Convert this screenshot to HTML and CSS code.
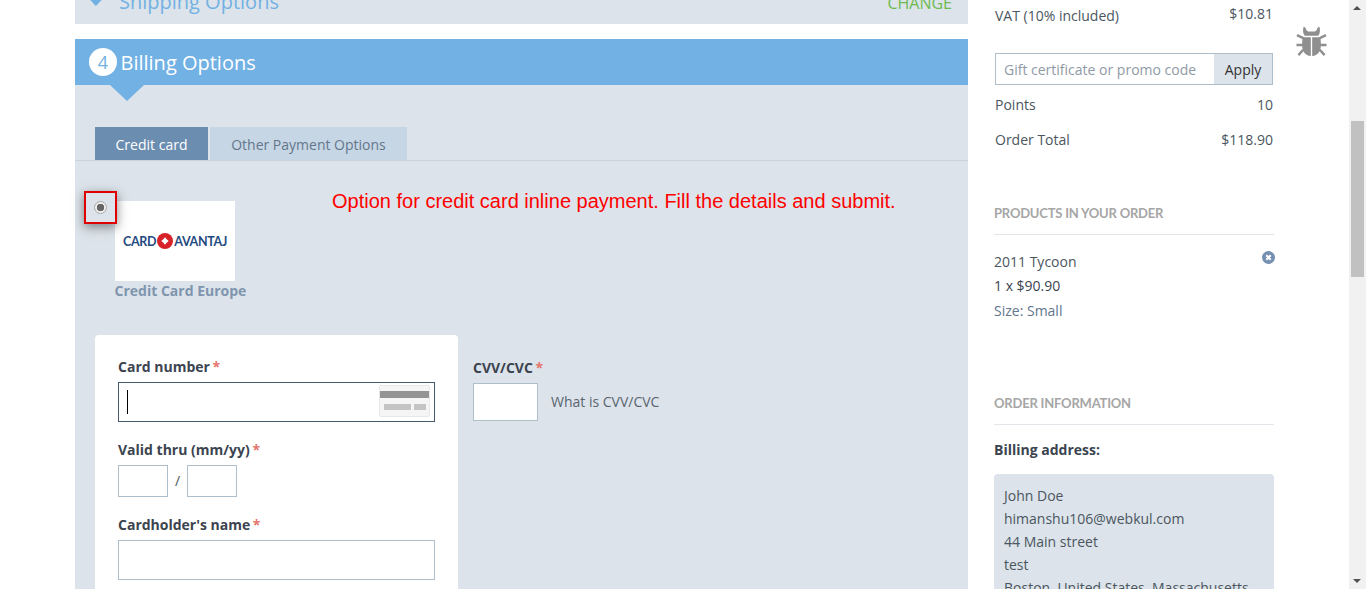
FILE: index.html
```html
<!DOCTYPE html>
<html lang="en">
  <head>
    <meta charset="UTF-8" />
    <title>Checkout - Billing Options</title>
    <link rel="stylesheet" href="styles.css">
  </head>
  <body>
    <div class="page">
      <main class="steps">
        <!-- Previous step, scrolled mostly out of view -->
        <section class="step-done">
          <span class="done-title"><span class="check"></span>Shipping Options</span>
          <a class="change" href="#">CHANGE</a>
        </section>

        <section class="step-billing">
          <header class="step-head">
            <span class="step-num">4</span>
            <h2>Billing Options</h2>
          </header>

          <div class="tabs">
            <a class="tab tab-active" href="#">Credit card</a>
            <a class="tab" href="#">Other Payment Options</a>
          </div>

          <div class="method">
            <span class="mark-box"><span class="radio"></span></span>
            <p class="note">Option for credit card inline payment. Fill the details and submit.</p>
            <div class="logo">
              <span>CARD</span>
              <svg width="16" height="16" viewBox="0 0 17 17">
                <circle cx="8.5" cy="8.5" r="8.5" fill="#d8222a" />
                <path d="M8.5 4.5c1 1.600 2.400 3 4 4-1.600 1-3 2.400-4 4-1-1.600-2.400-3-4-4 1.600-1 3-2.400 4-4z" fill="#fff" />
              </svg>
              <span>AVANTAJ</span>
            </div>
            <p class="method-name">Credit Card Europe</p>
          </div>

          <div class="card-row">
            <form class="card-form">
              <label>Card number <em>*</em></label>
              <div class="field field-focus">
                <span class="caret"></span>
                <span class="card-pic"><i class="strip"></i><i class="num"></i><i class="cvv"></i></span>
              </div>
              <label>Valid thru (mm/yy) <em>*</em></label>
              <div class="expiry">
                <span class="field field-small"></span>
                <span class="slash">/</span>
                <span class="field field-small"></span>
              </div>
              <label>Cardholder's name <em>*</em></label>
              <div class="field"></div>
            </form>
            <div class="cvv-col">
              <label>CVV/CVC <em>*</em></label>
              <div class="cvv-row">
                <span class="field field-cvv"></span>
                <span class="cvv-help">What is CVV/CVC</span>
              </div>
            </div>
          </div>
        </section>
      </main>

      <aside class="summary">
        <div class="row row-vat"><span>VAT (10% included)</span><span class="vat-val">$10.81</span></div>
        <div class="promo">
          <span class="promo-input">Gift certificate or promo code</span>
          <span class="promo-btn">Apply</span>
        </div>
        <div class="row row-points"><span>Points</span><span>10</span></div>
        <div class="row row-total"><span>Order Total</span><span>$118.90</span></div>

        <h3 class="side-title side-products">PRODUCTS IN YOUR ORDER</h3>
        <div class="product">
          <p>2011 Tycoon</p>
          <p class="qty">1 x $90.90</p>
          <p class="size">Size: Small</p>
          <svg class="remove" width="13" height="13" viewBox="0 0 13 13">
            <circle cx="6.5" cy="6.5" r="6.5" fill="#7590b0" />
            <path d="M4.3 4.3l4.4 4.4M8.7 4.3l-4.4 4.4" stroke="#fff" stroke-width="2" />
          </svg>
        </div>

        <h3 class="side-title side-info">ORDER INFORMATION</h3>
        <p class="addr-title">Billing address:</p>
        <div class="addr">
          <p>John Doe</p>
          <p>himanshu106@webkul.com</p>
          <p>44 Main street</p>
          <p>test</p>
          <p>Boston, United States, Massachusetts</p>
        </div>
      </aside>

      <svg class="bug" width="31" height="33" viewBox="0 0 32 34">
        <path d="M8 1.500l2 1.500c.2 2 1.200 3.200 2.600 3.600h6.800C20.800 6.200 21.800 5 22 3l2-1.500c1.200 3 1 7-1 9.500H9C7 8.500 6.800 4.500 8 1.500z" fill="#8f8f8f" />
        <path d="M7 12.500h8.300V32C9.500 31.500 6.300 27 6.300 20.500c0-3 .2-6 .7-8zM16.700 12.500H25c.5 2 .7 5 .7 8 0 6.500-3.200 11-9 11.500z" fill="#8f8f8f" />
        <path d="M1 10.500l6.500 3M31 10.500l-6.500 3M.5 20.500h6.500M31.500 20.500H25M2.500 31l5-5.500M29.500 31l-5-5.500" stroke="#8f8f8f" stroke-width="2.600" fill="none" />
      </svg>

      <div class="scrollbar">
        <span class="arrow arrow-up"></span>
        <div class="track"><div class="thumb"></div></div>
        <span class="arrow arrow-down"></span>
      </div>
    </div>
  </body>
</html>
```

FILE: styles.css
```css
/* Reset */
* {
  margin: 0;
  padding: 0;
  box-sizing: border-box;
}

html,
body {
  height: 589px;
  overflow: hidden;
}

body {
  background-color: #fff;
  color: #4b5660;
  font-family: "Open Sans", "Noto Sans", sans-serif;
  font-size: 14px;
}

a {
  text-decoration: none;
}

.page {
  position: relative;
  display: flex;
  height: 589px;
  padding-left: 75px;
  overflow: hidden;
}

/* Left column */
.steps {
  flex: 0 0 893px;
}

.step-done {
  display: flex;
  justify-content: space-between;
  height: 35px;
  margin-top: -11px;
  padding: 0 16px 0 15px;
  background-color: #dce3ea;
  line-height: 26px;
}

.done-title {
  display: flex;
  align-items: center;
  height: 26px;
  color: #72b1e3;
  font-size: 20px;
}

.check {
  width: 14px;
  height: 8px;
  margin: 0 14px 8px 1px;
  border-left: 4px solid #72b1e3;
  border-bottom: 4px solid #72b1e3;
  transform: rotate(-45deg);
}

.change {
  margin-top: 1px;
  color: #6dbb4f;
  font-size: 16px;
}

.step-billing {
  height: 560px;
  margin-top: 15px;
  background-color: #dce3ea;
}

.step-head {
  position: relative;
  display: flex;
  align-items: center;
  height: 46px;
  padding-left: 14px;
  background-color: #72b1e3;
  color: #fff;
}

/* Little arrow under the header */
.step-head::after {
  content: "";
  position: absolute;
  top: 46px;
  left: 35px;
  border-left: 17px solid transparent;
  border-right: 17px solid transparent;
  border-top: 16px solid #72b1e3;
}

.step-num {
  width: 28px;
  height: 28px;
  margin-right: 4px;
  border-radius: 50%;
  background-color: #fff;
  color: #72b1e3;
  font-size: 18px;
  line-height: 28px;
  text-align: center;
}

.step-head h2 {
  margin-left: -0.5px;
  font-size: 20px;
  font-weight: 400;
}

.tabs {
  display: flex;
  height: 34px;
  margin-top: 42px;
  padding-left: 20px;
  border-bottom: 1px solid #c8d3de;
}

.tab {
  width: 197px;
  height: 33px;
  background-color: #c7d6e5;
  color: #62768c;
  line-height: 35px;
  text-align: center;
}

.tab-active {
  width: 113px;
  margin-right: 2px;
  background-color: #6b8db0;
  color: #fff;
}

/* Payment method */
.method {
  position: relative;
  height: 174px;
  padding: 40px 0 0 40px;
}

.mark-box {
  position: absolute;
  top: 30px;
  left: 9px;
  display: flex;
  align-items: center;
  justify-content: center;
  width: 33px;
  height: 33px;
  border: 2px solid #e00000;
  box-shadow: 0 3px 10px rgba(60, 60, 60, 0.6);
  background-color: #dce3ea;
}

.radio {
  width: 13px;
  height: 13px;
  border: 1px solid #aaa;
  border-radius: 50%;
  background: radial-gradient(circle, #666 0 3.5px, #eee 4px);
}

.note {
  position: absolute;
  top: 29px;
  left: 257px;
  color: #f00;
  font-family: "Liberation Sans", sans-serif;
  font-size: 20px;
  white-space: nowrap;
}

.logo {
  display: flex;
  align-items: center;
  justify-content: center;
  gap: 1px;
  width: 120px;
  height: 80px;
  background-color: #fff;
  color: #1f4a80;
  font-family: "Lato", sans-serif;
  font-size: 12.5px;
  font-weight: 700;
  letter-spacing: -0.3px;
}

.method-name {
  margin-left: -0.5px;
  color: #7f95ae;
  font-weight: 700;
  line-height: 20px;
}

/* Card form */
.card-row {
  display: flex;
  padding-left: 20px;
}

.card-form {
  flex: 0 0 363px;
  height: 300px;
  padding: 22px 23px;
  border-radius: 4px;
  background-color: #fff;
}

label {
  display: block;
  color: #3b444f;
  font-weight: 700;
  line-height: 20px;
}

label em {
  margin-left: -1px;
  color: #e4746c;
  font-style: normal;
}

.field {
  display: block;
  height: 40px;
  border: 1px solid #aebfcb;
  background-color: #fff;
}

.card-form .field + label {
  margin-top: 18px;
}

.card-form label {
  margin-bottom: 5px;
}

.expiry + label {
  margin-top: 18px;
}

.field-focus {
  position: relative;
  display: flex;
  justify-content: space-between;
  padding: 7px 4px 0 8px;
  border-color: #46596b;
}

.caret {
  width: 1px;
  height: 24px;
  background-color: #000;
}

.card-pic {
  position: relative;
  display: block;
  width: 51px;
  height: 32px;
  margin-top: -5px;
  border: 1px solid #e8e8e8;
  border-radius: 2px;
  background-color: #f5f5f5;
}

.card-pic i {
  position: absolute;
  background-color: #c4c4c4;
}

.card-pic .strip {
  top: 5px;
  left: 0;
  right: 0;
  height: 7px;
  background-color: #949494;
}

.card-pic .num {
  top: 18px;
  left: 4px;
  width: 27px;
  height: 6px;
}

.card-pic .cvv {
  top: 18px;
  left: 34px;
  width: 12px;
  height: 6px;
}

.expiry {
  display: flex;
  align-items: center;
}

.field-small {
  width: 50px;
  height: 32px;
}

.slash {
  width: 19px;
  margin-top: -1px;
  text-align: center;
}

.cvv-col {
  padding: 23px 0 0 15px;
}

.cvv-col label {
  margin-bottom: 5px;
}

.cvv-row {
  display: flex;
  align-items: center;
}

.field-cvv {
  width: 65px;
  height: 38px;
  margin-right: 13px;
}

.cvv-help {
  margin-top: -2px;
  color: #5a6570;
}

/* Right column */
.summary {
  flex: 0 0 280px;
  margin-left: 26px;
}

.row {
  display: flex;
  justify-content: space-between;
  padding: 0 1px;
  line-height: 20px;
}

.row-vat {
  height: 20px;
  margin-top: 6px;
}

.vat-val {
  margin-top: -2px;
}

.promo {
  display: flex;
  height: 32px;
  margin: 27px 1px 0;
  border: 1px solid #aebfcb;
}

.promo-input {
  flex: 1;
  padding-left: 8px;
  color: #8f9aa6;
  line-height: 32px;
}

.promo-btn {
  width: 58px;
  background-color: #dce3ea;
  color: #333;
  line-height: 31px;
  text-align: center;
}

.row-points {
  margin-top: 10px;
}

.row-total {
  margin-top: 15px;
}

.side-title {
  padding-bottom: 11px;
  border-bottom: 1px solid #e2e6ea;
  color: #a6a6a6;
  font-family: "Lato", sans-serif;
  font-size: 13px;
  font-weight: 700;
  letter-spacing: -0.2px;
  line-height: 20px;
}

.side-products {
  margin-top: 53px;
}

.product {
  position: relative;
  height: 158px;
  padding-top: 15px;
  line-height: 24px;
}

.product p {
  height: 24px;
}

.product .size {
  height: 25px;
  margin-top: 1px;
}

.qty {
  color: #3b444f;
}

.size {
  color: #62768c;
}

.remove {
  position: absolute;
  top: 16px;
  right: -1px;
}

.addr-title {
  margin-top: 15px;
  color: #3b444f;
  font-weight: 700;
  line-height: 20px;
}

.addr {
  margin-top: 14px;
  padding: 10px;
  border-radius: 4px;
  background-color: #dce3ea;
  line-height: 23px;
}

.bug {
  position: absolute;
  top: 25px;
  left: 1296px;
}

/* Fake browser scrollbar */
.scrollbar {
  position: absolute;
  top: 0;
  right: 0;
  display: flex;
  flex-direction: column;
  width: 17px;
  height: 589px;
  background-color: #f1f1f1;
}

.arrow {
  flex: 0 0 17px;
  position: relative;
}

.arrow::after {
  content: "";
  position: absolute;
  left: 4px;
  border-left: 4px solid transparent;
  border-right: 4px solid transparent;
}

.arrow-up::after {
  top: 6px;
  border-bottom: 4px solid #505050;
}

.arrow-down::after {
  top: 7px;
  border-top: 4px solid #505050;
}

.track {
  flex: 1;
  padding: 104px 2px 0;
}

.thumb {
  height: 156px;
  background-color: #c1c1c1;
}
```
